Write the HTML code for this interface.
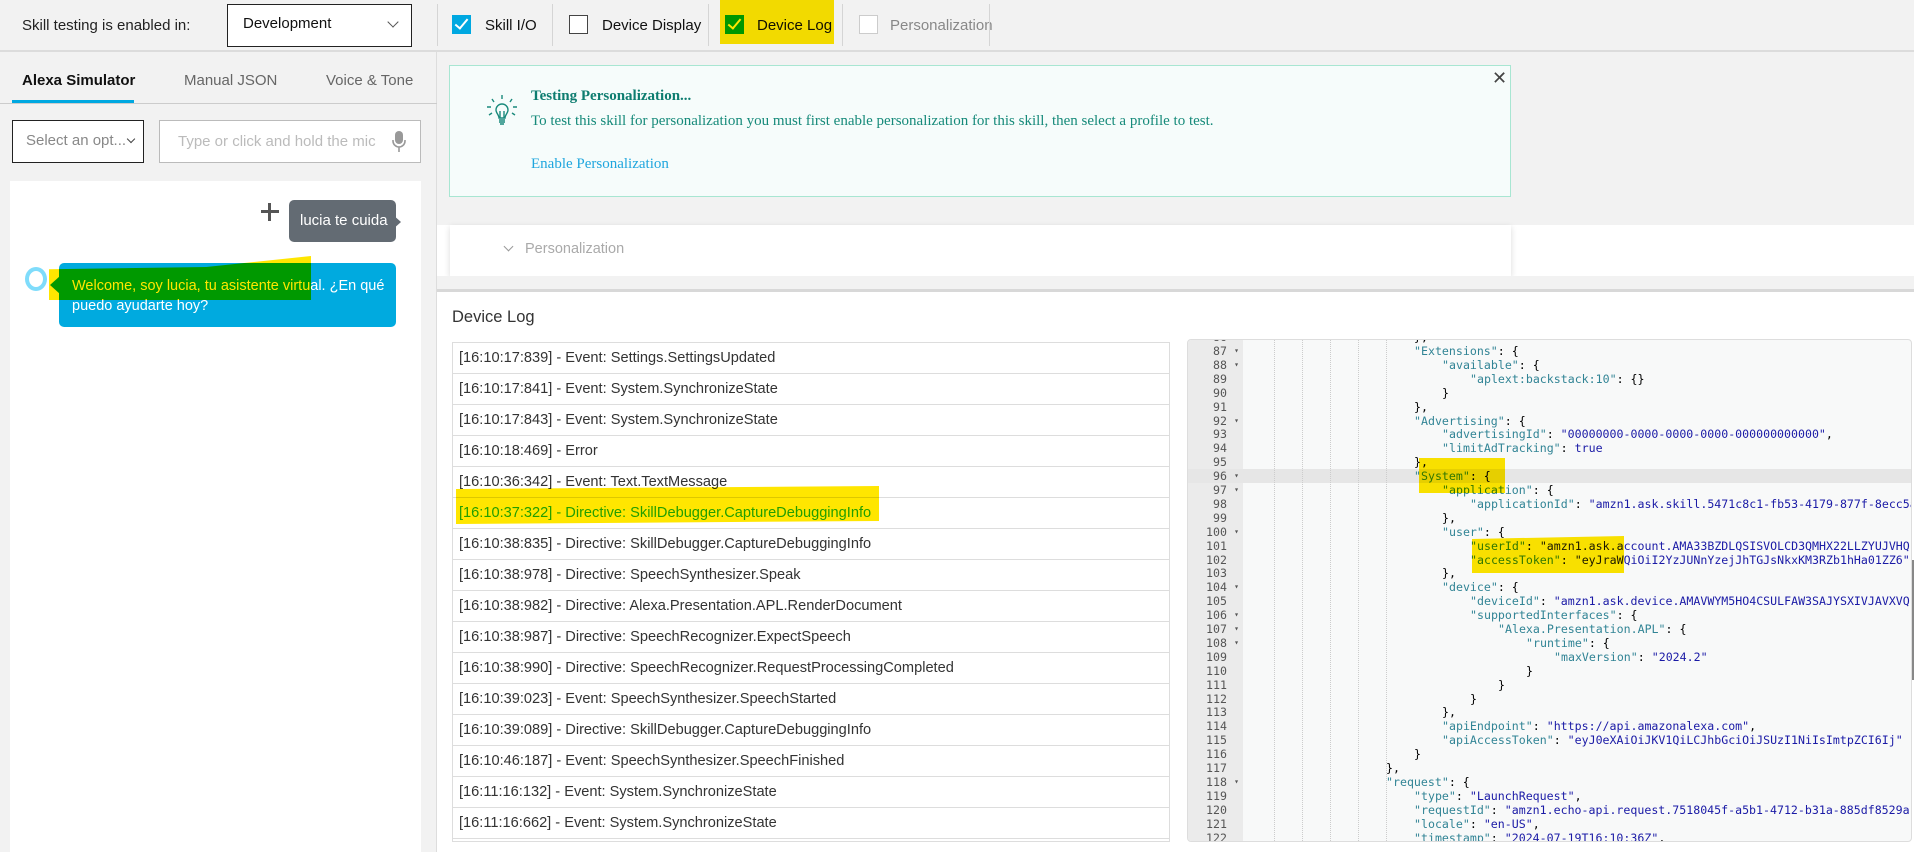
<!DOCTYPE html>
<html><head><meta charset="utf-8">
<style>
*{margin:0;padding:0;box-sizing:border-box}
body{width:1914px;height:852px;overflow:hidden;background:#fff;font-family:"Liberation Sans","DejaVu Sans",sans-serif;color:#232f3e;position:relative}
.a{position:absolute}
.top{left:0;top:0;width:1914px;height:52px;background:#f2f2f2;border-bottom:2px solid #dcdcdc}
.vd{width:1px;background:#d5d5d5}
.cb{width:19px;height:19px;border:1px solid #444;background:#fff}
.cbc{background:#00a8e1;border-color:#00a8e1}
.lbl{font-size:15px;color:#111}
.left{left:0;top:52px;width:437px;height:800px;background:#f2f2f2;border-right:1px solid #ddd}
.hl{background:#ffe600;mix-blend-mode:multiply}
.log{left:452px;top:342px;width:718px;height:500px;border:1px solid #ddd;background:#fff;overflow:hidden}
.row{height:31px;line-height:30px;border-bottom:1px solid #ddd;padding-left:6px;font-size:14.6px;color:#333;white-space:nowrap}
.ed{left:1187px;top:339px;width:725px;height:503px;border:1px solid #ddd;border-radius:4px;background:#f8f9f9;overflow:hidden}
.gut{left:0;top:0;width:55px;height:503px;background:#ebebeb}
.code{font-family:"DejaVu Sans Mono","Liberation Mono",monospace;font-size:11.6px;white-space:pre;color:#000}
.ln{position:absolute;left:0;width:55px;height:14px;line-height:14px;font-family:"DejaVu Sans Mono",monospace;font-size:11.6px;color:#555;text-align:right;padding-right:16px}
.cl{position:absolute;height:14px;line-height:14px}
.k{color:#318495}.s{color:#1a1aa6}.b{color:#1a1aa6}
.g{position:absolute;top:0;width:0;height:503px;border-left:1px dotted #ccc}
</style></head><body>

<div class="a top"></div>
<div class="a" style="left:22px;top:17px;font-size:15px;color:#222">Skill testing is enabled in:</div>
<div class="a" style="left:227px;top:4px;width:185px;height:43px;border:1px solid #222;background:#fff"></div>
<div class="a" style="left:243px;top:15px;font-size:15px;color:#111">Development</div>
<div class="a" style="left:389px;top:18px;width:8px;height:8px;border-right:1.5px solid #555;border-bottom:1.5px solid #555;transform:rotate(45deg)"></div>
<div class="a vd" style="left:437px;top:4px;height:42px"></div>

<div class="a cb cbc" style="left:452px;top:15px"></div>
<div class="a" style="left:458px;top:16px;width:7px;height:13px;border-right:2px solid #fff;border-bottom:2px solid #fff;transform:rotate(40deg)"></div>
<div class="a lbl" style="left:485px;top:17px">Skill I/O</div>
<div class="a vd" style="left:552px;top:4px;height:42px"></div>
<div class="a cb" style="left:569px;top:15px"></div>
<div class="a lbl" style="left:602px;top:17px">Device Display</div>
<div class="a vd" style="left:708px;top:4px;height:42px"></div>
<div class="a cb cbc" style="left:725px;top:15px"></div>
<div class="a" style="left:731px;top:16px;width:7px;height:13px;border-right:2px solid #fff;border-bottom:2px solid #fff;transform:rotate(40deg)"></div>
<div class="a lbl" style="left:757px;top:17px">Device Log</div>
<div class="a hl" style="left:720px;top:0;width:114px;height:44px"></div>
<div class="a vd" style="left:842px;top:4px;height:42px"></div>
<div class="a cb" style="left:859px;top:15px;border-color:#ccc"></div>
<div class="a lbl" style="left:890px;top:17px;color:#888">Personalization</div>
<div class="a vd" style="left:989px;top:4px;height:42px"></div>

<div class="a left"></div>
<div class="a" style="left:22px;top:72px;font-size:15px;font-weight:bold;color:#111">Alexa Simulator</div>
<div class="a" style="left:184px;top:72px;font-size:15px;color:#666">Manual JSON</div>
<div class="a" style="left:326px;top:72px;font-size:15px;color:#666">Voice &amp; Tone</div>
<div class="a" style="left:12px;top:100px;width:122px;height:3px;background:#00a8e1"></div>
<div class="a" style="left:0;top:103px;width:437px;height:1px;background:#ccc"></div>
<div class="a" style="left:12px;top:120px;width:132px;height:43px;border:1px solid #222;background:#fff"></div>
<div class="a" style="left:26px;top:132px;font-size:15px;color:#888">Select an opt...</div>
<div class="a" style="left:128px;top:136px;width:6px;height:6px;border-right:1.3px solid #444;border-bottom:1.3px solid #444;transform:rotate(45deg)"></div>
<div class="a" style="left:159px;top:120px;width:262px;height:43px;border:1px solid #bbb;background:#fff"></div>
<div class="a" style="left:178px;top:133px;font-size:15px;color:#bbb">Type or click and hold the mic</div>
<svg class="a" style="left:392px;top:131px" width="14" height="22" viewBox="0 0 14 22"><rect x="3" y="0" width="8" height="13" rx="4" fill="#999"/><path d="M1 9v1a6 6 0 0 0 12 0V9M7 16v5" stroke="#999" stroke-width="1.6" fill="none"/></svg>

<div class="a" style="left:10px;top:181px;width:411px;height:671px;background:#fff"></div>
<div class="a" style="left:261px;top:210px;width:18px;height:3px;background:#555"></div>
<div class="a" style="left:268px;top:203px;width:3px;height:18px;background:#555"></div>
<div class="a" style="left:289px;top:200px;width:107px;height:42px;background:#636b73;border-radius:5px;color:#fff;font-size:15px;line-height:42px;padding-left:11px">lucia te cuida</div>
<div class="a" style="left:392px;top:214px;width:0;height:0;border-left:9px solid #636b73;border-top:8px solid transparent;border-bottom:8px solid transparent"></div>

<div class="a" style="left:25px;top:267px;width:22px;height:24px;border:4px solid #7fdcfb;border-radius:50%"></div>
<div class="a" style="left:59px;top:263px;width:337px;height:64px;background:#00aadf;border-radius:5px"></div>
<div class="a" style="left:50px;top:276px;width:0;height:0;border-right:10px solid #00aadf;border-top:9px solid transparent;border-bottom:9px solid transparent"></div>
<div class="a" style="left:72px;top:276px;font-size:14.5px;color:#fff;line-height:20px">Welcome, soy lucia, tu asistente virtual. ¿En qué<br>puedo ayudarte hoy?</div>
<div class="a hl" style="left:49px;top:256px;width:262px;height:44px;clip-path:polygon(0 30%,60% 25%,100% 0,100% 100%,0 100%)"></div>

<div class="a" style="left:449px;top:65px;width:1062px;height:132px;background:#f6fcfb;border:1px solid #a8e6d2"></div>
<svg class="a" style="left:485px;top:93px" width="34" height="34" viewBox="0 0 34 34" fill="none" stroke="#1a8a7c" stroke-width="1.4"><path d="M17 2v4M7 6l2 3M27 6l-2 3M2 14h4M28 14h4M4 22l3-2M30 22l-3-2"/><path d="M11 17a6 6 0 1 1 12 0c0 3-3 5-3 8h-6c0-3-3-5-3-8z"/><path d="M15 25v-7M19 25v-7M14 27h6M14 29h6M15 31h4"/></svg>
<div class="a" style="left:531px;top:88px;font-family:'Liberation Serif',serif;font-weight:bold;font-size:15px;color:#0e7d70">Testing Personalization...</div>
<div class="a" style="left:531px;top:113px;font-family:'Liberation Serif',serif;font-size:15px;color:#168a7a">To test this skill for personalization you must first enable personalization for this skill, then select a profile to test.</div>
<div class="a" style="left:531px;top:156px;font-family:'Liberation Serif',serif;font-size:15px;color:#1fa6de">Enable Personalization</div>
<div class="a" style="left:1492px;top:68px;font-size:18px;color:#444">✕</div>

<div class="a" style="left:450px;top:225px;width:1061px;height:51px;background:#fff;box-shadow:0 2px 6px rgba(0,0,0,.15)"></div>
<div class="a" style="left:505px;top:243px;width:7px;height:7px;border-right:1.3px solid #999;border-bottom:1.3px solid #999;transform:rotate(45deg)"></div>
<div class="a" style="left:525px;top:241px;font-size:14.5px;color:#aaa">Personalization</div>

<div class="a" style="left:437px;top:276px;width:1477px;height:14px;background:#f2f2f2"></div>
<div class="a" style="left:437px;top:52px;width:1477px;height:173px;background:#f2f2f2;z-index:-1"></div>
<div class="a" style="left:437px;top:289px;width:1477px;height:3px;background:#d8d8d8"></div>
<div class="a" style="left:452px;top:308px;font-size:16.5px;color:#333">Device Log</div>

<div class="a log">
<div class="row">[16:10:17:839] - Event: Settings.SettingsUpdated</div>
<div class="row">[16:10:17:841] - Event: System.SynchronizeState</div>
<div class="row">[16:10:17:843] - Event: System.SynchronizeState</div>
<div class="row">[16:10:18:469] - Error</div>
<div class="row">[16:10:36:342] - Event: Text.TextMessage</div>
<div class="row" style="color:#22b022">[16:10:37:322] - Directive: SkillDebugger.CaptureDebuggingInfo</div>
<div class="row">[16:10:38:835] - Directive: SkillDebugger.CaptureDebuggingInfo</div>
<div class="row">[16:10:38:978] - Directive: SpeechSynthesizer.Speak</div>
<div class="row">[16:10:38:982] - Directive: Alexa.Presentation.APL.RenderDocument</div>
<div class="row">[16:10:38:987] - Directive: SpeechRecognizer.ExpectSpeech</div>
<div class="row">[16:10:38:990] - Directive: SpeechRecognizer.RequestProcessingCompleted</div>
<div class="row">[16:10:39:023] - Event: SpeechSynthesizer.SpeechStarted</div>
<div class="row">[16:10:39:089] - Directive: SkillDebugger.CaptureDebuggingInfo</div>
<div class="row">[16:10:46:187] - Event: SpeechSynthesizer.SpeechFinished</div>
<div class="row">[16:11:16:132] - Event: System.SynchronizeState</div>
<div class="row">[16:11:16:662] - Event: System.SynchronizeState</div>
</div>
<div class="a hl" style="left:456px;top:486px;width:423px;height:38px;clip-path:polygon(0 8%,100% 0,100% 92%,0 100%)"></div>

<div class="a ed">
<div class="a gut"></div>
<div class="a" style="left:0;top:129px;width:725px;height:14px;background:#e6e6e6"></div>
<div class="g" style="left:86px"></div><div class="g" style="left:114px"></div><div class="g" style="left:142px"></div><div class="g" style="left:170px"></div><div class="g" style="left:198px"></div>
<div class="code" id="c"></div>
</div>
<div class="a hl" style="left:1419px;top:458px;width:86px;height:35px"></div>
<div class="a hl" style="left:1472px;top:536px;width:152px;height:37px;clip-path:polygon(0 8%,100% 0,100% 100%,0 100%)"></div>
<div class="a" style="left:1912px;top:560px;width:2px;height:120px;background:#888"></div>

<script>
var L=[
[86,6,'},',0],
[87,6,'<span class=k>"Extensions"</span>: {',1],
[88,7,'<span class=k>"available"</span>: {',1],
[89,8,'<span class=k>"aplext:backstack:10"</span>: {}',0],
[90,7,'}',0],
[91,6,'},',0],
[92,6,'<span class=k>"Advertising"</span>: {',1],
[93,7,'<span class=k>"advertisingId"</span>: <span class=s>"00000000-0000-0000-0000-000000000000"</span>,',0],
[94,7,'<span class=k>"limitAdTracking"</span>: <span class=b>true</span>',0],
[95,6,'},',0],
[96,6,'<span class=k>"System"</span>: {',1],
[97,7,'<span class=k>"application"</span>: {',1],
[98,8,'<span class=k>"applicationId"</span>: <span class=s>"amzn1.ask.skill.5471c8c1-fb53-4179-877f-8ecc5a2b1c90"</span>',0],
[99,7,'},',0],
[100,7,'<span class=k>"user"</span>: {',1],
[101,8,'<span class=k>"userId"</span>: <span class=s>"amzn1.ask.account.AMA33BZDLQSISVOLCD3QMHX22LLZYUJVHQ"</span>,',0],
[102,8,'<span class=k>"accessToken"</span>: <span class=s>"eyJraWQiOiI2YzJUNnYzejJhTGJsNkxKM3RZb1hHa01ZZ6"</span>',0],
[103,7,'},',0],
[104,7,'<span class=k>"device"</span>: {',1],
[105,8,'<span class=k>"deviceId"</span>: <span class=s>"amzn1.ask.device.AMAVWYM5HO4CSULFAW3SAJYSXIVJAVXVQ"</span>,',0],
[106,8,'<span class=k>"supportedInterfaces"</span>: {',1],
[107,9,'<span class=k>"Alexa.Presentation.APL"</span>: {',1],
[108,10,'<span class=k>"runtime"</span>: {',1],
[109,11,'<span class=k>"maxVersion"</span>: <span class=s>"2024.2"</span>',0],
[110,10,'}',0],
[111,9,'}',0],
[112,8,'}',0],
[113,7,'},',0],
[114,7,'<span class=k>"apiEndpoint"</span>: <span class=s>"https://api.amazonalexa.com"</span>,',0],
[115,7,'<span class=k>"apiAccessToken"</span>: <span class=s>"eyJ0eXAiOiJKV1QiLCJhbGciOiJSUzI1NiIsImtpZCI6Ij"</span>',0],
[116,6,'}',0],
[117,5,'},',0],
[118,5,'<span class=k>"request"</span>: {',1],
[119,6,'<span class=k>"type"</span>: <span class=s>"LaunchRequest"</span>,',0],
[120,6,'<span class=k>"requestId"</span>: <span class=s>"amzn1.echo-api.request.7518045f-a5b1-4712-b31a-885df8529a"</span>,',0],
[121,6,'<span class=k>"locale"</span>: <span class=s>"en-US"</span>,',0],
[122,6,'<span class=k>"timestamp"</span>: <span class=s>"2024-07-19T16:10:36Z"</span>,',0]
];
var p=document.querySelector('.ed');
L.forEach(function(r){var y=4+(r[0]-87)*13.9;
var n=document.createElement('div');n.className='ln';n.style.top=y+'px';n.innerHTML=r[0]+(r[3]?'<span style="position:absolute;right:4px;font-size:8px">▾</span>':'');p.appendChild(n);
var c=document.createElement('div');c.className='cl code';c.style.top=y+'px';c.style.left=(58+28*r[1])+'px';c.innerHTML=r[2];p.appendChild(c);});
</script>
</body></html>
